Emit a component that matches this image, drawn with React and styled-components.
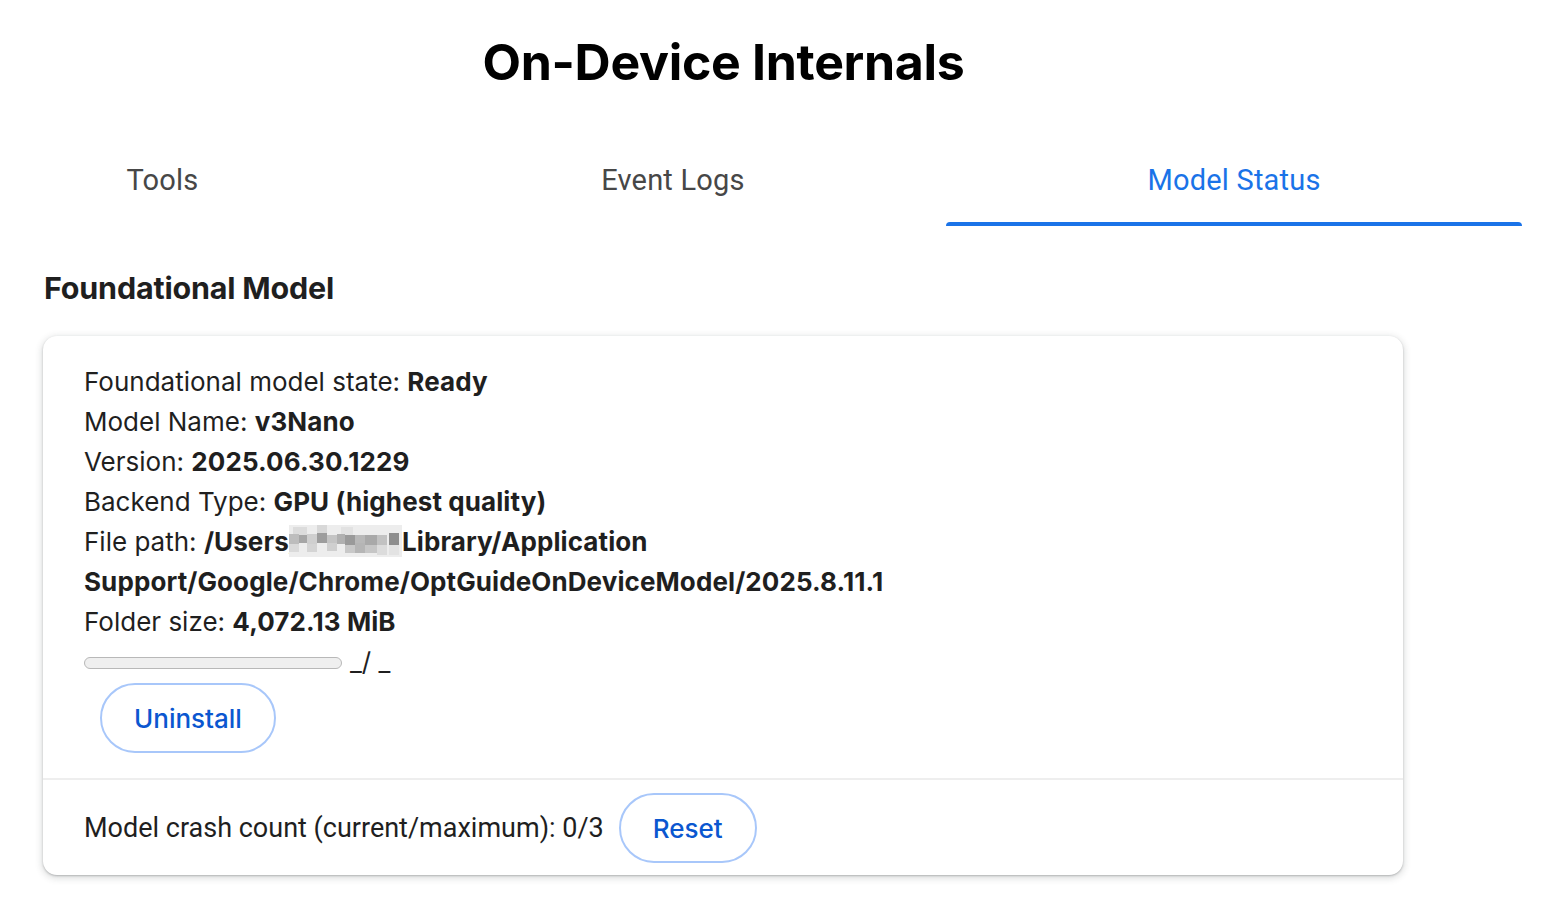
import React from "react";
import styled, { createGlobalStyle } from "styled-components";

const GlobalStyle = createGlobalStyle`
  html, body {
    margin: 0;
    padding: 0;
    background: #ffffff;
    overflow: hidden;
  }
  body {
    font-family: Inter, "Noto Sans", sans-serif;
    color: #1f1f1f;
  }
`;

const Page = styled.div`
  width: 1546px;
  min-height: 918px;
  display: flex;
  flex-direction: column;
`;

const Header = styled.header`
  margin: 0 24px 0 -75px;
  display: flex;
  flex-direction: column;
  align-items: stretch;
`;

const Title = styled.h1`
  margin: 31px 0 0;
  text-align: center;
  font-family: Inter, sans-serif;
  font-weight: 700;
  font-size: 50px;
  line-height: 62px;
  letter-spacing: -0.3px;
  color: #000;
`;

const TabBar = styled.nav`
  margin-top: 47px;
  display: flex;
`;

const Tab = styled.div`
  position: relative;
  flex: 1 1 auto;
  text-align: center;
  padding: 24px 0 29px;
  font-family: Roboto, sans-serif;
  font-size: 29px;
  line-height: 33px;
  letter-spacing: 0.2px;
  color: ${(p) => (p.$active ? "#1a73e8" : "#474747")};

  &::after {
    content: "";
    display: ${(p) => (p.$active ? "block" : "none")};
    position: absolute;
    left: 0;
    right: 0;
    bottom: 0;
    height: 4px;
    border-radius: 4px 4px 0 0;
    background: #1a73e8;
  }
`;

const Content = styled.main`
  padding: 0 0 0 43px;
  display: flex;
  flex-direction: column;
`;

const SectionTitle = styled.h2`
  margin: 44px 0 0 1px;
  font-family: Inter, sans-serif;
  font-weight: 700;
  font-size: 30.5px;
  line-height: 36px;
  letter-spacing: -0.2px;
  color: #1f1f1f;
`;

const Card = styled.section`
  margin-top: 30px;
  width: 1360px;
  border-radius: 14px;
  background: #fff;
  box-shadow: 0 1px 2px rgba(60, 64, 67, 0.3), 0 2px 6px 2px rgba(60, 64, 67, 0.15);
  display: flex;
  flex-direction: column;
`;

const CardBody = styled.div`
  padding: 26px 41px 25px 41px;
  display: flex;
  flex-direction: column;
  align-items: flex-start;
`;

const Line = styled.div`
  font-family: Inter, sans-serif;
  font-size: 26px;
  line-height: 40px;
  color: #1f1f1f;
  white-space: pre-wrap;
`;

const Value = styled.b`
  font-weight: 700;
  letter-spacing: 0.1px;
`;

const Censor = styled.svg`
  display: inline-block;
  vertical-align: -6px;
  width: 113px;
  height: 32px;
  margin-left: -10px;
`;

const ProgressRow = styled.div`
  height: 40px;
  display: flex;
  align-items: center;
  gap: 8px;
  font-family: Inter, sans-serif;
  font-size: 26px;
  color: #1f1f1f;
`;

const Progress = styled.div`
  width: 256px;
  height: 10px;
  border: 1px solid #b8b8b8;
  border-radius: 7px;
  background: #efefef;
  margin-top: 2px;
`;

const ProgressText = styled.span`
  line-height: 40px;
`;

const PillButton = styled.button`
  box-sizing: border-box;
  height: 70px;
  padding: 0 ${(p) => p.$pad || 32}px;
  margin: ${(p) => p.$margin || "0"};
  border: 2px solid #a8c7fa;
  border-radius: 35px;
  background: #fff;
  color: #0b57d0;
  font-family: Inter, sans-serif;
  font-weight: 500;
  font-size: 26px;
  cursor: pointer;
  flex: 0 0 auto;
`;

const Divider = styled.hr`
  margin: 0;
  border: 0;
  height: 2px;
  background: #eeeeee;
`;

const CardFooter = styled.div`
  padding: 13px 41px 12px 41px;
  display: flex;
  align-items: center;
  gap: 15px;
`;

const FooterText = styled.span`
  font-family: Roboto, sans-serif;
  font-size: 27px;
  color: #1f1f1f;
`;

const censorCells = [
  // [x, y, w, h, color]
  [0, 0, 113, 32, "#ededed"],
  [4, 2, 14, 8, "#dcdcdc"],
  [28, 0, 10, 8, "#d8d8d8"],
  [52, 2, 12, 8, "#e2e2e2"],
  [0, 9, 10, 10, "#bdbdbd"],
  [10, 10, 8, 8, "#a6a6a6"],
  [18, 9, 10, 10, "#cfcfcf"],
  [28, 8, 10, 10, "#9d9d9d"],
  [38, 10, 10, 8, "#c4c4c4"],
  [48, 9, 8, 10, "#b0b0b0"],
  [56, 10, 10, 10, "#9a9a9a"],
  [66, 10, 10, 8, "#b8b8b8"],
  [76, 10, 12, 10, "#a9a9a9"],
  [88, 10, 10, 10, "#c2c2c2"],
  [100, 8, 10, 12, "#8e8e8e"],
  [0, 19, 10, 8, "#dadada"],
  [18, 19, 10, 8, "#d4d4d4"],
  [38, 18, 10, 8, "#cfcfcf"],
  [56, 20, 10, 8, "#c8c8c8"],
  [66, 18, 10, 10, "#b5b5b5"],
  [76, 20, 12, 8, "#c6c6c6"],
  [88, 20, 10, 10, "#dcdcdc"],
  [100, 20, 10, 10, "#e3e3e3"],
];

function CensorBlock() {
  return (
    <Censor viewBox="0 0 113 32" aria-hidden="true">
      {censorCells.map(([x, y, w, h, c], i) => (
        <rect key={i} x={x} y={y} width={w} height={h} fill={c} />
      ))}
    </Censor>
  );
}

export default function App() {
  return (
    <Page>
      <GlobalStyle />
      <Header>
        <Title>On-Device Internals</Title>
        <TabBar>
          <Tab>Tools</Tab>
          <Tab>Event Logs</Tab>
          <Tab $active>Model Status</Tab>
        </TabBar>
      </Header>
      <Content>
        <SectionTitle>Foundational Model</SectionTitle>
        <Card>
          <CardBody>
            <Line>
              Foundational model state: <Value>Ready</Value>
            </Line>
            <Line>
              Model Name: <Value>v3Nano</Value>
            </Line>
            <Line>
              Version: <Value>2025.06.30.1229</Value>
            </Line>
            <Line>
              Backend Type: <Value>GPU (highest quality)</Value>
            </Line>
            <Line>
              File path:{" "}
              <Value>
                /Users/
                <CensorBlock />
                Library/Application
                <br />
                Support/Google/Chrome/OptGuideOnDeviceModel/2025.8.11.1
              </Value>
            </Line>
            <Line>
              Folder size: <Value>4,072.13 MiB</Value>
            </Line>
            <ProgressRow>
              <Progress />
              <ProgressText>_/ _</ProgressText>
            </ProgressRow>
            <PillButton $margin="1px 0 0 16px">Uninstall</PillButton>
          </CardBody>
          <Divider />
          <CardFooter>
            <FooterText>Model crash count (current/maximum): 0/3</FooterText>
            <PillButton $pad={32}>Reset</PillButton>
          </CardFooter>
        </Card>
      </Content>
    </Page>
  );
}
